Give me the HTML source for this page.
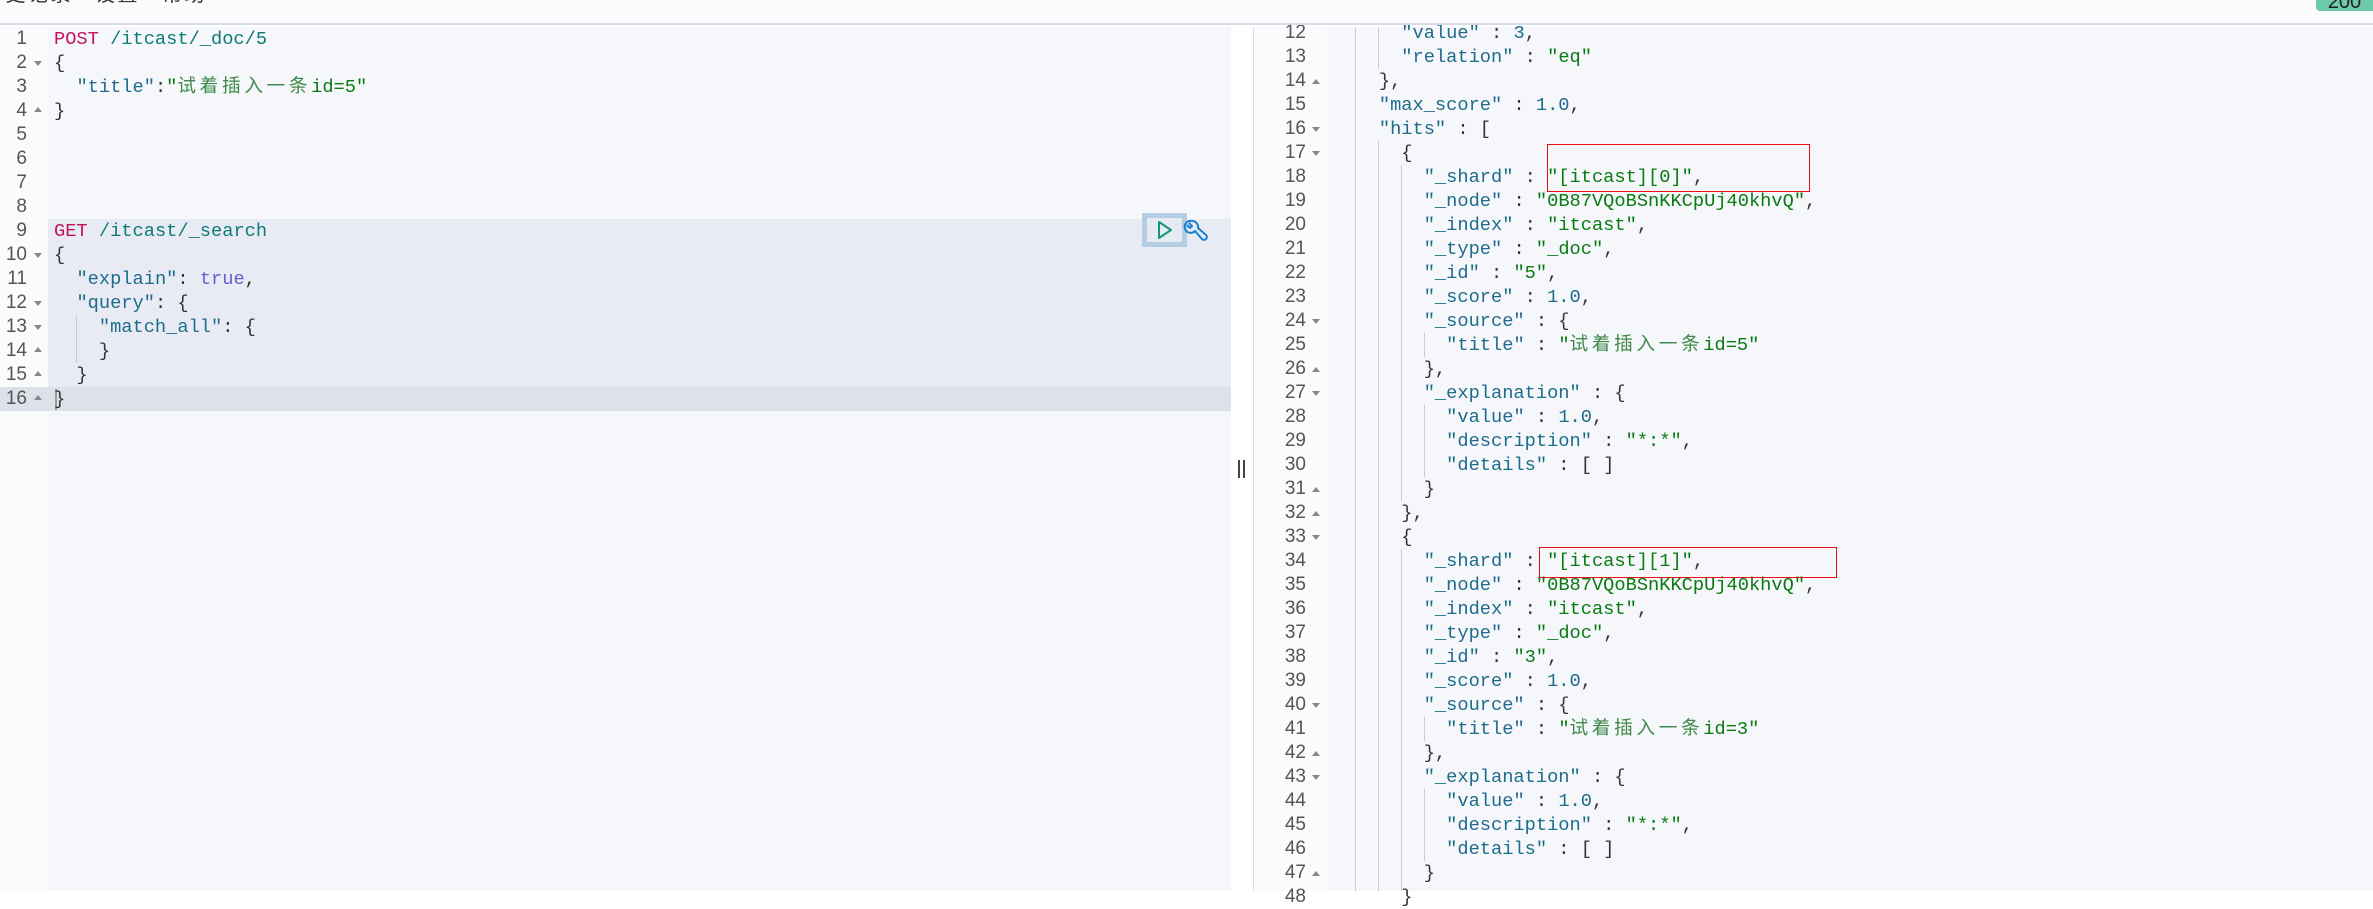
<!DOCTYPE html>
<html><head><meta charset="utf-8"><style>
*{margin:0;padding:0;box-sizing:border-box}
body{width:2373px;height:891px;overflow:hidden;background:#fff;position:relative;font-family:"Liberation Mono","Noto Sans CJK SC",monospace;font-size:18.7px;color:#333}
.abs{position:absolute}
.top{left:0;top:0;width:2373px;height:25px;background:#fafbfd;border-bottom:2px solid #d5dae6;z-index:5}
.menu{position:absolute;top:-17px;font-family:"Liberation Sans","Noto Sans CJK SC",sans-serif;font-size:20px;letter-spacing:2.5px;color:#333;line-height:24px;white-space:nowrap}
.badge{right:0;top:0;width:57px;height:11px;background:#6dcaa9;border-radius:0 0 0 4px;z-index:6;overflow:hidden;font-family:"Liberation Sans",sans-serif;font-size:20px;text-align:center;line-height:4px;color:#222}
.ln{position:absolute;height:24px;line-height:24px;white-space:pre}
.num{position:absolute;height:24px;line-height:24px;text-align:right;color:#555;font-family:"Liberation Sans",sans-serif;font-size:19px}
.k{color:#1e6b8c}.s{color:#0a7a12}.m{color:#c5105f}.p{color:#0d7a76}.b{color:#6b5bd1}.n{color:#1e6b8c}
.cj{letter-spacing:3.6px;color:#3f8a4a}
.tri{position:absolute;width:0;height:0;border-left:4px solid transparent;border-right:4px solid transparent}
.dn{border-top:5px solid #888}.up{border-bottom:5px solid #888}
.g{position:absolute;width:1px;background:#c9cdd6}
.red{position:absolute;border:1.5px solid #e81010}
</style></head><body>
<div class="abs top">
 <div class="menu" style="left:-17px">历史记录</div>
 <div class="menu" style="left:95px">设置</div>
 <div class="menu" style="left:162px">帮助</div>
</div>
<div class="abs badge">200</div>

<!-- left pane -->
<div class="abs" style="left:0;top:27px;width:48px;height:864px;background:#fafbfc"></div>
<div class="abs" style="left:48px;top:27px;width:1183px;height:864px;background:#f5f7fa"></div>
<div class="abs" style="left:48px;top:219px;width:1183px;height:168px;background:#e8ebf3"></div>
<div class="abs" style="left:0;top:387px;width:1231px;height:24px;background:#dde1ea"></div>
<div class="g" style="left:76px;top:315px;height:48px"></div>
<div class="abs" style="left:55px;top:389px;width:2px;height:21px;background:#999"></div>

<div class="num" style="left:0;width:27px;top:27px">1</div>
<div class="num" style="left:0;width:27px;top:51px">2</div>
<div class="num" style="left:0;width:27px;top:75px">3</div>
<div class="num" style="left:0;width:27px;top:99px">4</div>
<div class="num" style="left:0;width:27px;top:123px">5</div>
<div class="num" style="left:0;width:27px;top:147px">6</div>
<div class="num" style="left:0;width:27px;top:171px">7</div>
<div class="num" style="left:0;width:27px;top:195px">8</div>
<div class="num" style="left:0;width:27px;top:219px">9</div>
<div class="num" style="left:0;width:27px;top:243px">10</div>
<div class="num" style="left:0;width:27px;top:267px">11</div>
<div class="num" style="left:0;width:27px;top:291px">12</div>
<div class="num" style="left:0;width:27px;top:315px">13</div>
<div class="num" style="left:0;width:27px;top:339px">14</div>
<div class="num" style="left:0;width:27px;top:363px">15</div>
<div class="num" style="left:0;width:27px;top:387px">16</div>
<div class="tri dn" style="left:34px;top:61px"></div>
<div class="tri up" style="left:34px;top:107px"></div>
<div class="tri dn" style="left:34px;top:253px"></div>
<div class="tri dn" style="left:34px;top:301px"></div>
<div class="tri dn" style="left:34px;top:325px"></div>
<div class="tri up" style="left:34px;top:347px"></div>
<div class="tri up" style="left:34px;top:371px"></div>
<div class="tri up" style="left:34px;top:395px"></div>

<div class="ln" style="left:54px;top:27px"><span class="m">POST</span> <span class="p">/itcast/_doc/5</span></div>
<div class="ln" style="left:54px;top:51px">{</div>
<div class="ln" style="left:54px;top:75px">  <span class="k">"title"</span>:<span class="s">"</span><span class="cj">试着插入一条</span><span class="s">id=5"</span></div>
<div class="ln" style="left:54px;top:99px">}</div>
<div class="ln" style="left:54px;top:219px"><span class="m">GET</span> <span class="p">/itcast/_search</span></div>
<div class="ln" style="left:54px;top:243px">{</div>
<div class="ln" style="left:54px;top:267px">  <span class="k">"explain"</span>: <span class="b">true</span>,</div>
<div class="ln" style="left:54px;top:291px">  <span class="k">"query"</span>: {</div>
<div class="ln" style="left:54px;top:315px">    <span class="k">"match_all"</span>: {</div>
<div class="ln" style="left:54px;top:339px">    }</div>
<div class="ln" style="left:54px;top:363px">  }</div>
<div class="ln" style="left:54px;top:387px">}</div>

<!-- action buttons -->
<div class="abs" style="left:1142px;top:213px;width:45px;height:34px;background:#b3cde3"></div>
<div class="abs" style="left:1147px;top:218px;width:35px;height:24px;background:#e6eaf2"></div>
<svg class="abs" style="left:1155px;top:219px" width="20" height="22" viewBox="0 0 20 22"><path d="M4 3 L16 11 L4 19 Z" fill="none" stroke="#17937c" stroke-width="2" stroke-linejoin="round"/></svg>
<svg class="abs" style="left:1183px;top:219px" width="26" height="26" viewBox="0 0 26 26"><path d="M9 2 A6 6 0 1 0 12 12 L19 20 A2.5 2.5 0 0 0 23 16 L15 9 A6 6 0 0 0 9 2 M6 4 L9 7 L7 9 L4 6" fill="none" stroke="#1a7fd0" stroke-width="2" stroke-linejoin="round"/></svg>

<!-- divider -->
<div class="abs" style="left:1231px;top:27px;width:22px;height:864px;background:#fff"></div>
<div class="abs" style="left:1238px;top:460px;width:2px;height:18px;background:#444"></div>
<div class="abs" style="left:1243px;top:460px;width:2px;height:18px;background:#444"></div>
<div class="abs" style="left:1253px;top:27px;width:1px;height:864px;background:#d8dbe0"></div>

<!-- right pane -->
<div class="abs" style="left:1254px;top:27px;width:73px;height:864px;background:#fafbfc"></div>
<div class="abs" style="left:1327px;top:27px;width:1046px;height:864px;background:#f5f7fa"></div>
<div id="right"></div>
<div class="g" style="left:1355px;top:27px;height:864px"></div>
<div class="g" style="left:1378px;top:27px;height:42px"></div>
<div class="g" style="left:1378px;top:141px;height:750px"></div>
<div class="g" style="left:1401px;top:165px;height:336px"></div>
<div class="g" style="left:1401px;top:549px;height:342px"></div>
<div class="g" style="left:1424px;top:333px;height:24px"></div>
<div class="g" style="left:1424px;top:405px;height:72px"></div>
<div class="g" style="left:1424px;top:717px;height:24px"></div>
<div class="g" style="left:1424px;top:789px;height:72px"></div>

<div class="num" style="left:1260px;width:46px;top:21px">12</div>
<div class="num" style="left:1260px;width:46px;top:45px">13</div>
<div class="num" style="left:1260px;width:46px;top:69px">14</div>
<div class="num" style="left:1260px;width:46px;top:93px">15</div>
<div class="num" style="left:1260px;width:46px;top:117px">16</div>
<div class="num" style="left:1260px;width:46px;top:141px">17</div>
<div class="num" style="left:1260px;width:46px;top:165px">18</div>
<div class="num" style="left:1260px;width:46px;top:189px">19</div>
<div class="num" style="left:1260px;width:46px;top:213px">20</div>
<div class="num" style="left:1260px;width:46px;top:237px">21</div>
<div class="num" style="left:1260px;width:46px;top:261px">22</div>
<div class="num" style="left:1260px;width:46px;top:285px">23</div>
<div class="num" style="left:1260px;width:46px;top:309px">24</div>
<div class="num" style="left:1260px;width:46px;top:333px">25</div>
<div class="num" style="left:1260px;width:46px;top:357px">26</div>
<div class="num" style="left:1260px;width:46px;top:381px">27</div>
<div class="num" style="left:1260px;width:46px;top:405px">28</div>
<div class="num" style="left:1260px;width:46px;top:429px">29</div>
<div class="num" style="left:1260px;width:46px;top:453px">30</div>
<div class="num" style="left:1260px;width:46px;top:477px">31</div>
<div class="num" style="left:1260px;width:46px;top:501px">32</div>
<div class="num" style="left:1260px;width:46px;top:525px">33</div>
<div class="num" style="left:1260px;width:46px;top:549px">34</div>
<div class="num" style="left:1260px;width:46px;top:573px">35</div>
<div class="num" style="left:1260px;width:46px;top:597px">36</div>
<div class="num" style="left:1260px;width:46px;top:621px">37</div>
<div class="num" style="left:1260px;width:46px;top:645px">38</div>
<div class="num" style="left:1260px;width:46px;top:669px">39</div>
<div class="num" style="left:1260px;width:46px;top:693px">40</div>
<div class="num" style="left:1260px;width:46px;top:717px">41</div>
<div class="num" style="left:1260px;width:46px;top:741px">42</div>
<div class="num" style="left:1260px;width:46px;top:765px">43</div>
<div class="num" style="left:1260px;width:46px;top:789px">44</div>
<div class="num" style="left:1260px;width:46px;top:813px">45</div>
<div class="num" style="left:1260px;width:46px;top:837px">46</div>
<div class="num" style="left:1260px;width:46px;top:861px">47</div>
<div class="num" style="left:1260px;width:46px;top:885px">48</div>
<div class="tri up" style="left:1312px;top:79px"></div>
<div class="tri dn" style="left:1312px;top:127px"></div>
<div class="tri dn" style="left:1312px;top:151px"></div>
<div class="tri dn" style="left:1312px;top:319px"></div>
<div class="tri up" style="left:1312px;top:367px"></div>
<div class="tri dn" style="left:1312px;top:391px"></div>
<div class="tri up" style="left:1312px;top:487px"></div>
<div class="tri up" style="left:1312px;top:511px"></div>
<div class="tri dn" style="left:1312px;top:535px"></div>
<div class="tri dn" style="left:1312px;top:703px"></div>
<div class="tri up" style="left:1312px;top:751px"></div>
<div class="tri dn" style="left:1312px;top:775px"></div>
<div class="tri up" style="left:1312px;top:871px"></div>

<div class="ln" style="left:1334px;top:21px">      <span class="k">"value"</span> : <span class="n">3</span>,</div>
<div class="ln" style="left:1334px;top:45px">      <span class="k">"relation"</span> : <span class="s">"eq"</span></div>
<div class="ln" style="left:1334px;top:69px">    },</div>
<div class="ln" style="left:1334px;top:93px">    <span class="k">"max_score"</span> : <span class="n">1.0</span>,</div>
<div class="ln" style="left:1334px;top:117px">    <span class="k">"hits"</span> : [</div>
<div class="ln" style="left:1334px;top:141px">      {</div>
<div class="ln" style="left:1334px;top:165px">        <span class="k">"_shard"</span> : <span class="s">"[itcast][0]"</span>,</div>
<div class="ln" style="left:1334px;top:189px">        <span class="k">"_node"</span> : <span class="s">"0B87VQoBSnKKCpUj40khvQ"</span>,</div>
<div class="ln" style="left:1334px;top:213px">        <span class="k">"_index"</span> : <span class="s">"itcast"</span>,</div>
<div class="ln" style="left:1334px;top:237px">        <span class="k">"_type"</span> : <span class="s">"_doc"</span>,</div>
<div class="ln" style="left:1334px;top:261px">        <span class="k">"_id"</span> : <span class="s">"5"</span>,</div>
<div class="ln" style="left:1334px;top:285px">        <span class="k">"_score"</span> : <span class="n">1.0</span>,</div>
<div class="ln" style="left:1334px;top:309px">        <span class="k">"_source"</span> : {</div>
<div class="ln" style="left:1334px;top:333px">          <span class="k">"title"</span> : <span class="s">"</span><span class="cj">试着插入一条</span><span class="s">id=5"</span></div>
<div class="ln" style="left:1334px;top:357px">        },</div>
<div class="ln" style="left:1334px;top:381px">        <span class="k">"_explanation"</span> : {</div>
<div class="ln" style="left:1334px;top:405px">          <span class="k">"value"</span> : <span class="n">1.0</span>,</div>
<div class="ln" style="left:1334px;top:429px">          <span class="k">"description"</span> : <span class="s">"*:*"</span>,</div>
<div class="ln" style="left:1334px;top:453px">          <span class="k">"details"</span> : [ ]</div>
<div class="ln" style="left:1334px;top:477px">        }</div>
<div class="ln" style="left:1334px;top:501px">      },</div>
<div class="ln" style="left:1334px;top:525px">      {</div>
<div class="ln" style="left:1334px;top:549px">        <span class="k">"_shard"</span> : <span class="s">"[itcast][1]"</span>,</div>
<div class="ln" style="left:1334px;top:573px">        <span class="k">"_node"</span> : <span class="s">"0B87VQoBSnKKCpUj40khvQ"</span>,</div>
<div class="ln" style="left:1334px;top:597px">        <span class="k">"_index"</span> : <span class="s">"itcast"</span>,</div>
<div class="ln" style="left:1334px;top:621px">        <span class="k">"_type"</span> : <span class="s">"_doc"</span>,</div>
<div class="ln" style="left:1334px;top:645px">        <span class="k">"_id"</span> : <span class="s">"3"</span>,</div>
<div class="ln" style="left:1334px;top:669px">        <span class="k">"_score"</span> : <span class="n">1.0</span>,</div>
<div class="ln" style="left:1334px;top:693px">        <span class="k">"_source"</span> : {</div>
<div class="ln" style="left:1334px;top:717px">          <span class="k">"title"</span> : <span class="s">"</span><span class="cj">试着插入一条</span><span class="s">id=3"</span></div>
<div class="ln" style="left:1334px;top:741px">        },</div>
<div class="ln" style="left:1334px;top:765px">        <span class="k">"_explanation"</span> : {</div>
<div class="ln" style="left:1334px;top:789px">          <span class="k">"value"</span> : <span class="n">1.0</span>,</div>
<div class="ln" style="left:1334px;top:813px">          <span class="k">"description"</span> : <span class="s">"*:*"</span>,</div>
<div class="ln" style="left:1334px;top:837px">          <span class="k">"details"</span> : [ ]</div>
<div class="ln" style="left:1334px;top:861px">        }</div>
<div class="ln" style="left:1334px;top:885px">      }</div>

<div class="red" style="left:1547px;top:144px;width:263px;height:48px"></div>
<div class="red" style="left:1539px;top:547px;width:298px;height:31px"></div>
<div class="abs top" style="z-index:4;background:transparent;border:none"></div>
</body></html>
